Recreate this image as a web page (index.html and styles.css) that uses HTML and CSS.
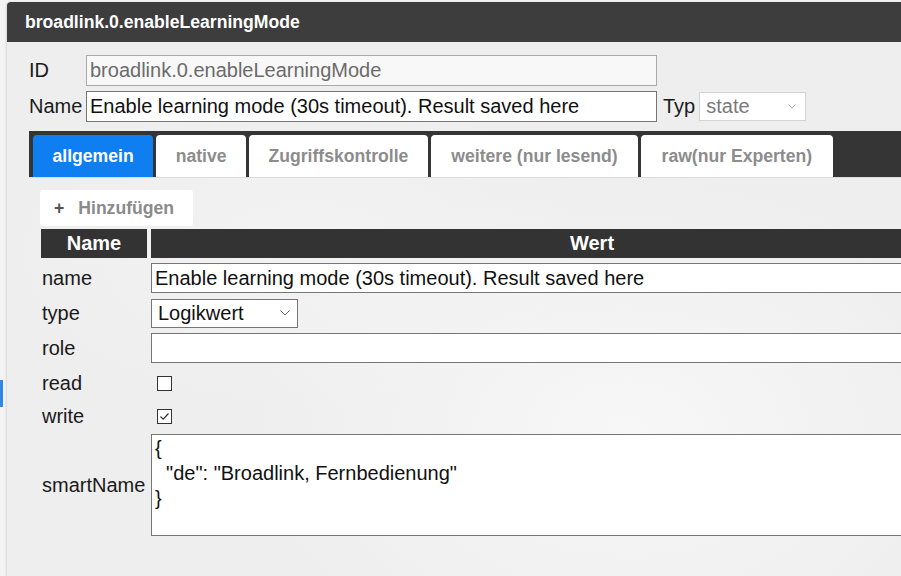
FILE: index.html
```html
<!DOCTYPE html>
<html lang="de">
<head>
<meta charset="utf-8">
<title>broadlink.0.enableLearningMode</title>
<link rel="stylesheet" href="styles.css">
</head>
<body>
<div class="screen">
  <aside class="backdrop"><span class="backdrop-mark"></span></aside>
  <section class="dialog">
    <header class="dialog-title">broadlink.0.enableLearningMode</header>
    <div class="dialog-body">
      <div class="field-row">
        <label class="field-label">ID</label>
        <input class="text-input readonly" value="broadlink.0.enableLearningMode" readonly>
      </div>
      <div class="field-row">
        <label class="field-label">Name</label>
        <input class="text-input" value="Enable learning mode (30s timeout). Result saved here">
        <span class="typ-label">Typ</span>
        <div class="select select-disabled">
          <span>state</span>
          <svg class="chevron chevron-small" viewBox="0 0 8 5" width="8" height="5"><polyline points="0.5,0.5 4,4 7.5,0.5" fill="none" stroke="#b0b0b0" stroke-width="1"/></svg>
        </div>
      </div>
      <nav class="tabs">
        <span class="tab active">allgemein</span>
        <span class="tab">native</span>
        <span class="tab">Zugriffskontrolle</span>
        <span class="tab tab-wide">weitere (nur lesend)</span>
        <span class="tab tab-wide">raw(nur Experten)</span>
      </nav>
      <div class="panel">
        <button class="add-btn"><span class="plus">+</span>Hinzufügen</button>
        <div class="props">
          <div class="th">Name</div>
          <div class="th">Wert</div>

          <div class="prop-label">name</div>
          <div class="prop-value"><input class="cell-input" value="Enable learning mode (30s timeout). Result saved here"></div>

          <div class="prop-label">type</div>
          <div class="prop-value">
            <div class="select select-type">
              <span>Logikwert</span>
              <svg class="chevron" viewBox="0 0 10 6" width="10" height="6"><polyline points="0.5,0.5 5,5 9.5,0.5" fill="none" stroke="#666" stroke-width="1"/></svg>
            </div>
          </div>

          <div class="prop-label">role</div>
          <div class="prop-value"><input class="cell-input" value=""></div>

          <div class="prop-label">read</div>
          <div class="prop-value"><span class="check"></span></div>

          <div class="prop-label">write</div>
          <div class="prop-value"><span class="check"><svg viewBox="0 0 13 13" width="13" height="13"><polyline points="2.5,6.5 5.2,9.2 10.5,3.5" fill="none" stroke="#333" stroke-width="1.2"/></svg></span></div>

          <div class="prop-label">smartName</div>
          <div class="prop-value"><textarea class="cell-area" readonly>{
  "de": "Broadlink, Fernbedienung"
}</textarea></div>
        </div>
      </div>
    </div>
  </section>
</div>
</body>
</html>
```
FILE: styles.css
```css
html, body {
  margin: 0;
  padding: 0;
}
body {
  width: 901px;
  height: 576px;
  overflow: hidden;
  background: #f4f4f4;
  font-family: "Liberation Sans", Arial, sans-serif;
  color: #1a1a1a;
}
.screen {
  display: flex;
  height: 576px;
  overflow: hidden;
}
.backdrop {
  width: 7px;
  flex-shrink: 0;
  padding-top: 380px;
  box-sizing: border-box;
  background: #f3f3f3;
}
.backdrop-mark {
  display: block;
  width: 3px;
  height: 27px;
  background: #2f86e8;
}
.dialog {
  width: 1100px;
  flex-shrink: 0;
  margin-top: 2px;
  background-color: #eeeeee;
  background-image:
    radial-gradient(ellipse 380px 260px at 620px 430px, #f7f7f7 0%, rgba(247,247,247,0) 100%),
    radial-gradient(ellipse 300px 160px at 300px 250px, #f3f3f3 0%, rgba(243,243,243,0) 100%);
  box-shadow: -1px 0 2px rgba(0,0,0,0.12);
  border-top-left-radius: 4px;
}
.dialog-title {
  height: 40px;
  line-height: 40px;
  padding-left: 18px;
  background: #3d3d3d;
  color: #ffffff;
  font-weight: bold;
  font-size: 17.6px;
  border-top-left-radius: 4px;
}
.dialog-body {
  padding: 13px 0 0 22px;
}
.field-row {
  display: flex;
  align-items: center;
  height: 31px;
  margin-bottom: 5px;
}
.field-label {
  width: 57px;
  font-size: 20px;
}
.text-input {
  width: 571px;
  height: 31px;
  box-sizing: border-box;
  margin: 0;
  border: 1px solid #767676;
  background: #ffffff;
  padding: 0 3px;
  font-family: "Liberation Sans", Arial, sans-serif;
  font-size: 20px;
  color: #111;
  outline: none;
}
.text-input.readonly {
  background: #f8f8f8;
  border-color: #a9a9a9;
  color: #6b6b6b;
}
.typ-label {
  margin-left: 6px;
  margin-right: 4px;
  font-size: 20px;
}
.select {
  display: flex;
  align-items: center;
  justify-content: space-between;
  box-sizing: border-box;
  height: 29px;
  background: #ffffff;
  font-size: 20px;
}
.select-disabled {
  width: 107px;
  border: 1px solid #d3d3d3;
  color: #7a7a7a;
  padding: 0 9px 0 6px;
}
.select-type {
  width: 147px;
  border: 1px solid #767676;
  color: #111;
  padding: 0 7px 0 6px;
}
.chevron {
  display: block;
}
.tabs {
  display: flex;
  align-items: flex-end;
  gap: 3px;
  margin-top: 9px;
  height: 47px;
  box-sizing: border-box;
  padding: 4px 0 0 4px;
  background: #353535;
  border-bottom: 1px solid #dcdcdc;
}
.tab {
  height: 42px;
  line-height: 43px;
  padding: 0 19.5px;
  background: #ffffff;
  color: #8c8c8c;
  font-weight: bold;
  font-size: 17.6px;
  border-radius: 4px 4px 0 0;
}
.tab.active {
  background: #0e7ef1;
  color: #ffffff;
}
.tab-wide {
  padding: 0 20.5px;
}
.panel {
  padding: 12px 0 0 11px;
}
.add-btn {
  display: flex;
  align-items: center;
  height: 36px;
  padding: 0 19px 0 14px;
  margin: 0;
  border: none;
  border-radius: 3px;
  background: #ffffff;
  font-family: "Liberation Sans", Arial, sans-serif;
  font-weight: bold;
  font-size: 17.6px;
  color: #8a8a8a;
}
.plus {
  color: #555;
  margin-right: 14px;
}
.props {
  display: grid;
  width: 992px;
  margin: 3px 0 0 1px;
  grid-template-columns: 106px 1fr;
  grid-template-rows: 29px 30px 30px 30px 30px 26px 102px;
  column-gap: 4px;
  row-gap: 5px;
}
.th {
  background: #333333;
  color: #ffffff;
  font-weight: bold;
  font-size: 20px;
  display: flex;
  align-items: center;
  justify-content: center;
}
.prop-label {
  display: flex;
  align-items: center;
  padding-left: 1px;
  font-size: 20px;
  color: #1a1a1a;
}
.prop-value {
  display: flex;
  align-items: center;
}
.cell-input {
  width: 100%;
  height: 30px;
  box-sizing: border-box;
  margin: 0;
  border: 1px solid #767676;
  background: #ffffff;
  padding: 0 3px;
  font-family: "Liberation Sans", Arial, sans-serif;
  font-size: 20px;
  color: #111;
  outline: none;
}
.check {
  display: flex;
  align-items: center;
  justify-content: center;
  width: 15px;
  height: 15px;
  box-sizing: border-box;
  margin-left: 6px;
  border: 1px solid #333;
  background: #ffffff;
}
.check svg {
  display: block;
}
.cell-area {
  width: 100%;
  height: 102px;
  box-sizing: border-box;
  margin: 0;
  border: 1px solid #767676;
  background: #ffffff;
  padding: 1px 3px;
  font-family: "Liberation Sans", Arial, sans-serif;
  font-size: 20px;
  line-height: 25px;
  color: #111;
  resize: none;
  overflow: hidden;
  outline: none;
  white-space: pre;
}
```
